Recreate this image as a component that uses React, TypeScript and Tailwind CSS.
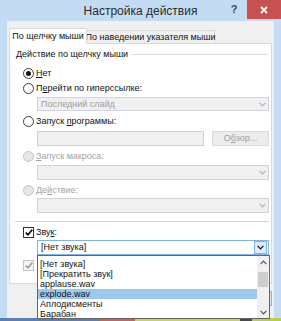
import React from 'react';

const font = { fontFamily: '"Liberation Sans", Arial, sans-serif' };

const Chevron: React.FC<{ className?: string }> = ({ className = '' }) => (
  <svg width="7" height="5" viewBox="0 0 7 5" className={className}>
    <path d="M0.6 0.8 L3.5 3.8 L6.4 0.8" fill="none" stroke="currentColor" strokeWidth="1.2" />
  </svg>
);

const Radio: React.FC<{ checked?: boolean; disabled?: boolean }> = ({ checked, disabled }) => (
  <span
    className={
      disabled
        ? 'w-[11px] h-[11px] rounded-full border border-[#c4c4c4] bg-[#e6e6e6] shrink-0'
        : 'w-[11px] h-[11px] rounded-full border border-[#3a3a3a] bg-white shrink-0 flex items-center justify-center'
    }
  >
    {checked && <span className="w-[5px] h-[5px] rounded-full bg-[#111]" />}
  </span>
);

const Check: React.FC<{ disabled?: boolean }> = ({ disabled }) => (
  <span
    className={
      disabled
        ? 'w-[11px] h-[11px] border border-[#c4c4c4] bg-[#f4f4f4] shrink-0 flex items-center justify-center text-[#9a9a9a]'
        : 'w-[11px] h-[11px] border border-[#333] bg-white shrink-0 flex items-center justify-center text-black'
    }
  >
    <svg width="8" height="7" viewBox="0 0 8 7">
      <path d="M0.8 3.6 L3 5.8 L7.2 0.8" fill="none" stroke="currentColor" strokeWidth="1.6" />
    </svg>
  </span>
);

const DisabledSelect: React.FC<{ text?: string; h: string }> = ({ text, h }) => (
  <div className={`ml-[22px] ${h} border border-[#cdd4dc] bg-[#f0f0f0] flex items-center`}>
    <span className="flex-1 pl-[3px] text-[#9c9c9c] leading-none">{text}</span>
    <span className="w-[12px] h-full flex items-center justify-center text-[#b4b4b4]">
      <Chevron />
    </span>
  </div>
);

const items = ['[Нет звука]', '[Прекратить звук]', 'applause.wav', 'explode.wav', 'Аплодисменты', 'Барабан'];

export default function App() {
  return (
    <div className="relative w-[281px] h-[321px] overflow-hidden flex flex-col text-[9px] text-[#111]" style={font}>
      <div className="flex-1 bg-[#c3dcf3] flex flex-col">
        {/* title bar */}
        <div className="h-[21px] flex items-start shrink-0">
          <div className="flex-1" />
          <div className="h-[21px] flex items-center text-[12px] text-[#2b2b2b] whitespace-nowrap">Настройка действия</div>
          <div className="flex-1 flex justify-end">
            <span className="h-[19px] w-[16px] flex items-center justify-center text-[11px] font-bold text-[#3a4a5a] mr-[5px]">?</span>
            <span className="h-[19px] w-[34px] bg-[#c75050] flex items-center justify-center text-white">
              <svg width="8" height="8" viewBox="0 0 8 8">
                <path d="M1 1 L7 7 M7 1 L1 7" stroke="currentColor" strokeWidth="1.8" />
              </svg>
            </span>
          </div>
        </div>

        {/* client */}
        <div className="flex-1 mx-[7px] bg-[#f0f0f0] pt-[7px] pl-[2px] pr-[2px]">
          <div className="flex items-end whitespace-nowrap">
            <div className="relative z-10 -mb-px h-[16px] w-[78px] border border-b-0 border-[#d9d9d9] bg-white flex items-center justify-center leading-none">
              По щелчку мыши
            </div>
            <div className="h-[13px] w-[128px] border border-b-0 border-l-0 border-[#d9d9d9] bg-[#f0f0f0] flex items-center justify-center leading-none">
              По наведении указателя мыши
            </div>
          </div>

          <div className="h-[241px] border border-[#d9d9d9] bg-white pl-[5px] pr-[2px] flex flex-col whitespace-nowrap">
            <div className="mt-[5px] h-[10px] pl-[1px] pr-[1px] flex items-center">
              <span className="leading-none">Действие по щелчку мыши</span>
              <span className="flex-1 h-px bg-[#dcdcdc] ml-[3px]" />
            </div>

            <div className="mt-[9px] h-[10px] pl-[8px] flex items-center gap-[2px]">
              <Radio checked />
              <span className="leading-none"><u>Н</u>ет</span>
            </div>
            <div className="mt-[5px] h-[10px] pl-[8px] flex items-center gap-[2px]">
              <Radio />
              <span className="leading-none">П<u>е</u>рейти по гиперссылке:</span>
            </div>
            <div className="mt-[4px]">
              <DisabledSelect text="Последний слайд" h="h-[14px]" />
            </div>

            <div className="mt-[5px] h-[10px] pl-[8px] flex items-center gap-[2px]">
              <Radio />
              <span className="leading-none">Запуск <u>п</u>рограммы:</span>
            </div>
            <div className="mt-[5px] ml-[22px] h-[15px] flex gap-[8px]">
              <div className="w-[167px] border border-[#c9d0d8] bg-[#f0f0f0]" />
              <div className="flex-1 border border-[#dadada] bg-[#ececec] flex items-center justify-center text-[#a0a0a0]">
                <span className="leading-none">О<u>б</u>зор...</span>
              </div>
            </div>

            <div className="mt-[5px] h-[10px] pl-[8px] flex items-center gap-[2px] text-[#a3a3a3]">
              <Radio disabled />
              <span className="leading-none"><u>З</u>апуск макроса:</span>
            </div>
            <div className="mt-[4px]">
              <DisabledSelect h="h-[15px]" />
            </div>

            <div className="mt-[5px] h-[10px] pl-[8px] flex items-center gap-[2px] text-[#a3a3a3]">
              <Radio disabled />
              <span className="leading-none">Де<u>й</u>ствие:</span>
            </div>
            <div className="mt-[3px]">
              <DisabledSelect h="h-[15px]" />
            </div>

            <div className="mt-[8px] h-px bg-[#d4d4d4]" />

            <div className="mt-[5px] h-[10px] pl-[8px] flex items-center gap-[2px]">
              <Check />
              <span className="leading-none">Зву<u>к</u>:</span>
            </div>
            <div className="mt-[3px] ml-[22px] h-[15px] border border-[#7eb4ea] bg-white flex items-center">
              <span className="flex-1 pl-[3px] leading-none">[Нет звука]</span>
              <span className="w-[13px] h-[13px] mr-px bg-[#dcecfc] border border-[#7eb4ea] flex items-center justify-center text-[#111]">
                <Chevron />
              </span>
            </div>

            <div className="mt-[5px] h-[10px] pl-[8px] flex items-center gap-[2px] text-[#a3a3a3]">
              <Check disabled />
            </div>
          </div>

          <div className="mt-[7px] flex justify-end gap-[6px]">
            <div className="w-[65px] h-[15px] border border-[#adadad] bg-[#e1e1e1]" />
            <div className="w-[65px] h-[15px] border border-[#adadad] bg-[#e1e1e1]" />
          </div>
        </div>
      </div>

      {/* desktop taskbar strip */}
      <div className="h-[3px] flex shrink-0">
        <div className="w-[100px] bg-[#5a7fb6]" />
        <div className="w-[35px] bg-[#cf5f58]" />
        <div className="w-[105px] bg-[#c9d54c]" />
        <div className="w-[12px] bg-[#4a4a4a]" />
        <div className="flex-1 bg-[#b9cf4a]" />
      </div>

      {/* open dropdown list */}
      <div className="absolute left-[37px] top-[255px] w-[233px] h-[64px] border border-[#646464] bg-white flex whitespace-nowrap">
        <div className="flex-1 pt-[3px]">
          {items.map((t, i) => (
            <div
              key={t}
              className={i === 3 ? 'h-[10px] pl-[2px] flex items-center leading-none bg-[#99c9ef]' : 'h-[10px] pl-[2px] flex items-center leading-none'}
            >
              {t}
            </div>
          ))}
        </div>
        <div className="w-[12px] bg-[#f0f0f0] flex flex-col items-center">
          <span className="h-[13px] flex items-center text-[#555]">
            <Chevron className="rotate-180" />
          </span>
          <span className="mt-[3px] w-[10px] h-[15px] bg-[#cdcdcd]" />
          <span className="flex-1" />
          <span className="h-[12px] flex items-center text-[#555]">
            <Chevron />
          </span>
        </div>
      </div>
    </div>
  );
}
